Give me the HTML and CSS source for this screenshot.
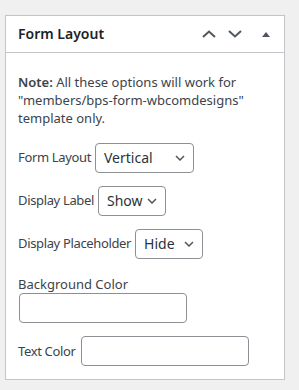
FILE: index.html
```html
<!DOCTYPE html>
<html lang="en">
<head>
  <meta charset="UTF-8" />
  <meta name="viewport" content="width=device-width, initial-scale=1.0" />
  <title>Form Layout</title>
  <link rel="stylesheet" href="styles.css">
</head>
<body>

  <!-- Form Layout meta box -->
  <div class="postbox">
    <div class="postbox-header">
      <h2>Form Layout</h2>
      <div class="handle-actions">
        <button class="handle-btn" aria-label="Move up">
          <svg width="14" height="8" viewBox="0 0 14 8"><path d="M1 7 L7 1.5 L13 7" fill="none" stroke="#50575e" stroke-width="2"/></svg>
        </button>
        <button class="handle-btn" aria-label="Move down">
          <svg width="14" height="8" viewBox="0 0 14 8"><path d="M1 1 L7 6.5 L13 1" fill="none" stroke="#50575e" stroke-width="2"/></svg>
        </button>
        <button class="handle-btn toggle" aria-label="Toggle panel">
          <svg width="8" height="5" viewBox="0 0 8 5"><path d="M0 5 L4 0 L8 5 Z" fill="#50575e"/></svg>
        </button>
      </div>
    </div>

    <div class="inside">
      <p class="note"><strong>Note:</strong> All these options will work for "members/bps-form-wbcomdesigns" template only.</p>

      <div class="row">
        <label for="form_layout">Form Layout</label>
        <span class="select-wrap w-layout">
          <select id="form_layout"><option>Vertical</option><option>Horizontal</option></select>
          <svg class="chev" width="10" height="6" viewBox="0 0 10 6"><path d="M1 1 L5 5 L9 1" fill="none" stroke="#50575e" stroke-width="1.5"/></svg>
        </span>
      </div>

      <div class="row">
        <label for="display_label">Display Label</label>
        <span class="select-wrap w-small">
          <select id="display_label"><option>Show</option><option>Hide</option></select>
          <svg class="chev" width="10" height="6" viewBox="0 0 10 6"><path d="M1 1 L5 5 L9 1" fill="none" stroke="#50575e" stroke-width="1.5"/></svg>
        </span>
      </div>

      <div class="row">
        <label for="display_placeholder">Display Placeholder</label>
        <span class="select-wrap w-small">
          <select id="display_placeholder"><option>Hide</option><option>Show</option></select>
          <svg class="chev" width="10" height="6" viewBox="0 0 10 6"><path d="M1 1 L5 5 L9 1" fill="none" stroke="#50575e" stroke-width="1.5"/></svg>
        </span>
      </div>

      <div class="stack">
        <label for="bg_color">Background Color</label>
        <input type="text" id="bg_color">
      </div>

      <div class="row">
        <label for="text_color">Text Color</label>
        <input type="text" id="text_color">
      </div>
    </div>
  </div>

</body>
</html>
```

FILE: styles.css
```css
* {
  box-sizing: border-box;
  margin: 0;
  padding: 0;
  font-family: 'Noto Sans', 'Liberation Sans', sans-serif;
}

body {
  background-color: #f0f0f1;
  color: #3c434a;
  font-size: 13px;
  line-height: 1.4;
  padding: 15px 0 0 5px;
}

.postbox {
  width: 280px;
  background-color: #fff;
  border: 1px solid #c3c4c7;
}

.postbox-header {
  display: flex;
  align-items: center;
  justify-content: space-between;
  height: 37px;
  border-bottom: 1px solid #c3c4c7;
}

.postbox-header h2 {
  font-size: 14px;
  font-weight: 600;
  color: #1d2327;
  padding: 0 12px;
}

.handle-actions {
  display: flex;
  align-items: center;
  padding-right: 6px;
}

.handle-btn {
  display: flex;
  align-items: center;
  justify-content: center;
  width: 26px;
  height: 36px;
  background: none;
  border: none;
}

.handle-btn.toggle {
  width: 24px;
  margin-left: 6px;
}

.inside {
  padding: 20px 12px 13px;
}

.note {
  margin-bottom: 15px;
}

.note strong {
  font-weight: 600;
}

.row {
  display: flex;
  align-items: center;
  gap: 4px;
  margin-bottom: 13px;
}

.row:last-child {
  margin-bottom: 0;
}

.row label {
  letter-spacing: -0.35px;
}

.stack {
  display: flex;
  flex-direction: column;
  align-items: flex-start;
  margin-top: 16px;
  margin-bottom: 13px;
}

.select-wrap {
  position: relative;
  display: inline-block;
}

.select-wrap select {
  appearance: none;
  -webkit-appearance: none;
  width: 100%;
  height: 30px;
  padding: 0 18px 0 8px;
  font-size: 14px;
  color: #2c3338;
  background: #fff;
  border: 1px solid #8c8f94;
  border-radius: 4px;
}

.select-wrap .chev {
  position: absolute;
  right: 9px;
  top: 12px;
  pointer-events: none;
}

.w-layout {
  width: 99px;
}

.w-small {
  width: 68px;
}

input[type="text"] {
  width: 168px;
  height: 30px;
  margin: 0 1px;
  padding: 0 8px;
  font-size: 14px;
  background: #fff;
  border: 1px solid #8c8f94;
  border-radius: 4px;
}
```
